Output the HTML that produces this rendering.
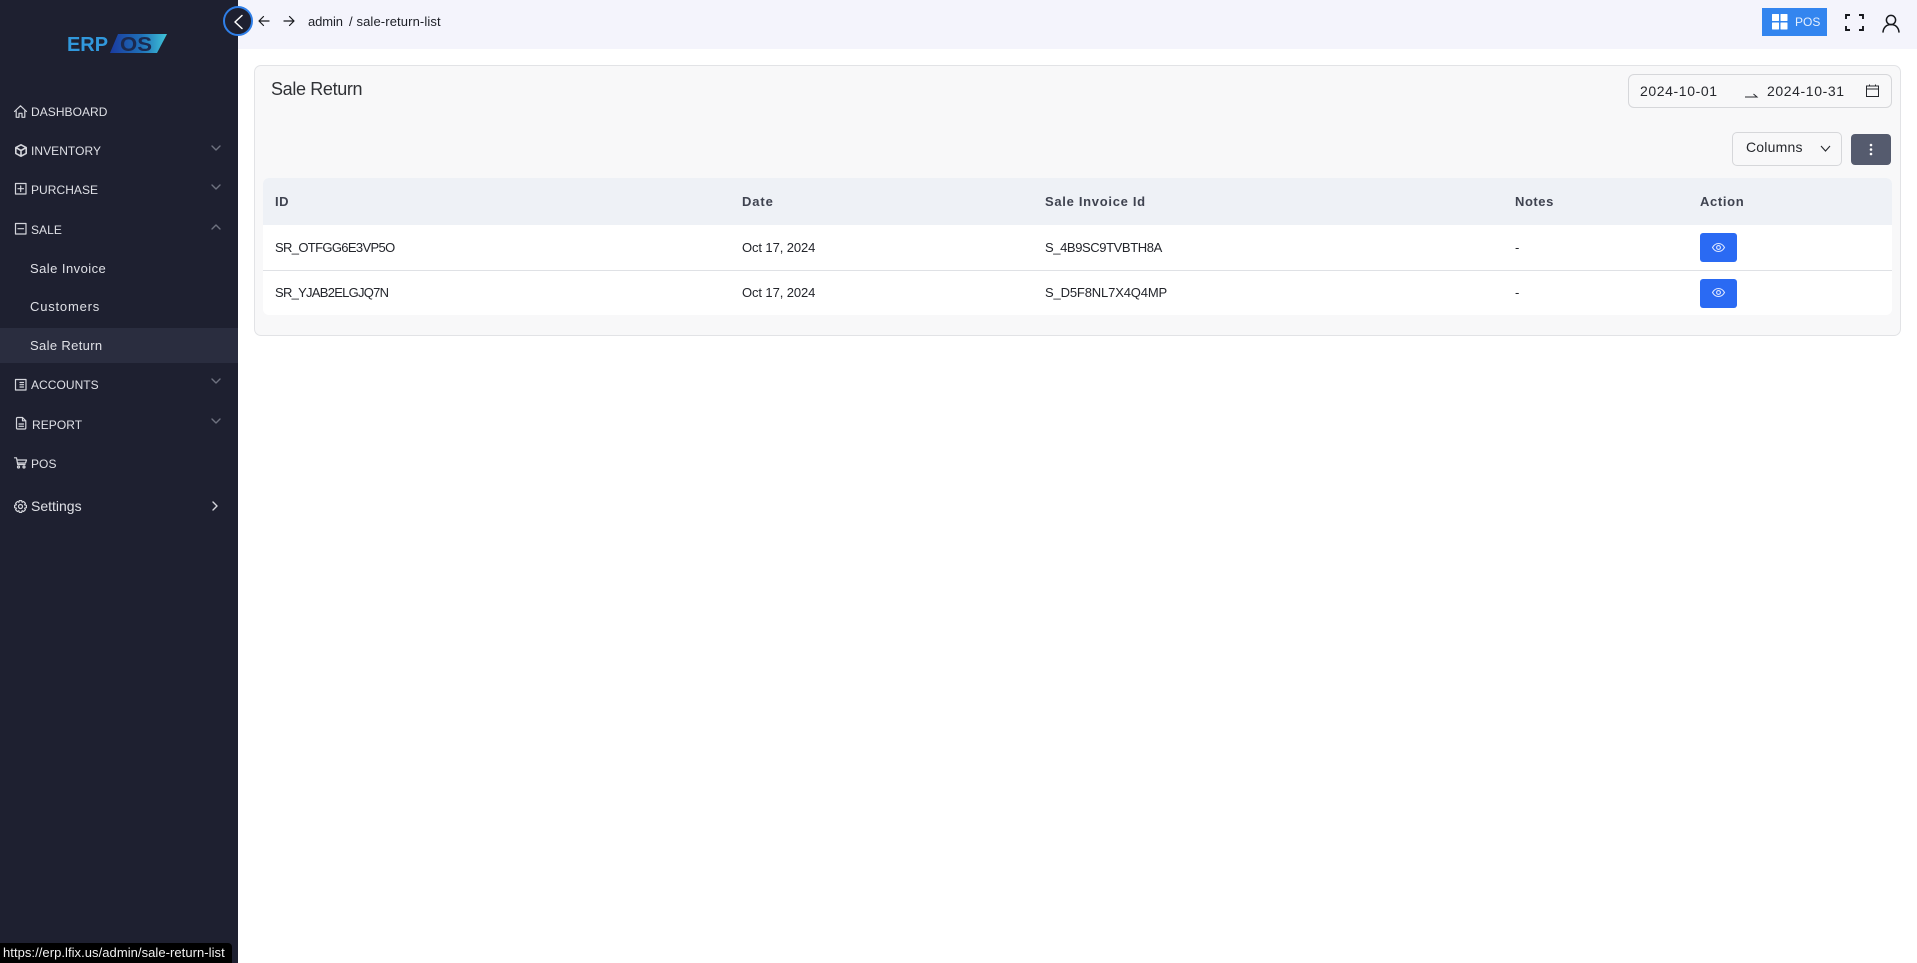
<!DOCTYPE html>
<html lang="en">
<head>
<meta charset="utf-8">
<title>Sale Return</title>
<style>
html,body{margin:0;padding:0;width:1917px;height:963px;overflow:hidden;background:#fff;font-family:"Liberation Sans",sans-serif}
*{box-sizing:border-box}
.a{position:absolute}
.t{position:absolute;white-space:nowrap;line-height:20px;height:20px}
.nav{color:#dfe0e6;font-size:12px;left:31px;letter-spacing:.05px}
.sub{color:#dfe0e6;font-size:13px;left:30px;letter-spacing:.45px}
.th{color:#3f4350;font-size:13px;font-weight:700;letter-spacing:.55px}
.td{color:#23252b;font-size:13px}
svg{position:absolute;overflow:visible}
.ic{fill:none;stroke:#d5d6dc;stroke-width:1.2;stroke-linecap:round;stroke-linejoin:round}
.ch{fill:none;stroke:#6f7280;stroke-width:1.4;stroke-linecap:round;stroke-linejoin:round}
.eye{width:37px;height:29px;left:1700px;background:#2a6af3;border-radius:3px}
</style>
</head>
<body>
<!-- top bar -->
<div class="a" style="left:238px;top:0;width:1679px;height:49px;background:#f4f4fc"></div>
<!-- sidebar -->
<div class="a" style="left:0;top:0;width:238px;height:963px;background:#1e2030"></div>
<div class="a" style="left:0;top:328px;width:238px;height:35px;background:#2a2d3f"></div>

<!-- logo -->
<svg style="left:66px;top:32px" width="102" height="24" viewBox="0 0 102 24">
<defs><linearGradient id="g" x1="0" x2="1" y1="0" y2="0"><stop offset="0" stop-color="#1a3a9e"/><stop offset=".55" stop-color="#1f70b8"/><stop offset="1" stop-color="#40c4d8"/></linearGradient></defs>
<polygon points="44,21 52,2 101,2 91,21" fill="url(#g)"/>
<text x="1" y="19" font-family="Liberation Sans" font-weight="700" font-size="20" fill="#3198dc" textLength="41" lengthAdjust="spacingAndGlyphs">ERP</text>
<text x="54" y="19" font-family="Liberation Sans" font-weight="700" font-size="20" fill="#1b2a50" textLength="32" lengthAdjust="spacingAndGlyphs">OS</text>
</svg>

<!-- collapse toggle -->
<div class="a" style="left:223px;top:6px;width:30px;height:30px;border-radius:50%;background:#1e2030;border:2px solid #2f7fe8"></div>
<svg style="left:232px;top:14px" width="14" height="16"><path d="M10 1.5 L3 8 L10 14.5" fill="none" stroke="#fff" stroke-width="1.5" stroke-linecap="round" stroke-linejoin="round"/></svg>

<!-- nav icons -->
<svg class="ic" style="left:14px;top:105px" width="13" height="13" viewBox="0 0 13 13"><path d="M.5 6.5 L6.5 .8 L12.5 6.5M2.2 5.5V12.3H5V8.3H8V12.3H10.8V5.5"/></svg>
<svg class="ic" style="left:15px;top:144px;stroke-width:1.6" width="12" height="13" viewBox="0 0 12 13"><path d="M6 .8 L11.2 3.6V9.4L6 12.2 L.8 9.4V3.6ZM.8 3.6 L6 6.5 L11.2 3.6M6 6.5V12.2"/></svg>
<svg class="ic" style="left:15px;top:183px" width="11" height="12"><rect x=".5" y=".5" width="10.5" height="10.5"/><path d="M5.7 3V8.5M3 5.7H8.5"/></svg>
<svg class="ic" style="left:15px;top:223px" width="11" height="12"><rect x=".5" y=".5" width="10.5" height="10.5"/><path d="M3 5.7H8.5"/></svg>
<svg class="ic" style="left:15px;top:379px" width="11" height="12"><rect x=".5" y=".5" width="10.5" height="10.5"/><path d="M5 3.5H8.5M5 5.7H8.5M5 8H8.5" /></svg>
<svg class="ic" style="left:16px;top:417px" width="11" height="13"><path d="M.5 1.5 Q.5 .5 1.5 .5H6.5L9.8 3.8V11Q9.8 12 8.8 12H1.5Q.5 12 .5 11ZM6.5 .5V3.8H9.8M3 7H7.5M3 9.3H7.5"/></svg>
<svg class="ic" style="left:14px;top:457px" width="13" height="12"><path d="M.5 .8H2.5L3.7 7.5H11M3 3H12.5L11.5 6H3.5"/><circle cx="4.5" cy="10" r="1"/><circle cx="10" cy="10" r="1"/></svg>
<svg class="ic" style="left:14px;top:500px" width="13" height="13" viewBox="0 0 13 13"><path d="M5.3.6H7.7L8.1 2.3 9.6 1.5 11.4 3.3 10.6 4.8 12.4 5.3V7.7L10.6 8.2 11.4 9.7 9.6 11.5 8.1 10.7 7.7 12.4H5.3L4.9 10.7 3.4 11.5 1.6 9.7 2.4 8.2.6 7.7V5.3L2.4 4.8 1.6 3.3 3.4 1.5 4.9 2.3Z"/><circle cx="6.5" cy="6.5" r="2"/></svg>

<!-- nav text -->
<div class="t nav" style="top:102px">DASHBOARD</div>
<div class="t nav" style="top:141px">INVENTORY</div>
<div class="t nav" style="top:180px">PURCHASE</div>
<div class="t nav" style="top:220px">SALE</div>
<div class="t sub" style="top:259px">Sale Invoice</div>
<div class="t sub" style="top:297px;letter-spacing:.8px">Customers</div>
<div class="t sub" style="top:336px;letter-spacing:.35px">Sale Return</div>
<div class="t nav" style="top:375px">ACCOUNTS</div>
<div class="t nav" style="top:415px;left:32px">REPORT</div>
<div class="t nav" style="top:454px">POS</div>
<div class="t nav" style="top:496px;font-size:14px;letter-spacing:0">Settings</div>

<!-- chevrons -->
<svg class="ch" style="left:211px;top:145px" width="10" height="6"><path d="M1 1L5 5L9 1"/></svg>
<svg class="ch" style="left:211px;top:184px" width="10" height="6"><path d="M1 1L5 5L9 1"/></svg>
<svg class="ch" style="left:211px;top:224px" width="10" height="6"><path d="M1 5L5 1L9 5"/></svg>
<svg class="ch" style="left:211px;top:378px" width="10" height="6"><path d="M1 1L5 5L9 1"/></svg>
<svg class="ch" style="left:211px;top:418px" width="10" height="6"><path d="M1 1L5 5L9 1"/></svg>
<svg style="left:212px;top:501px" width="6" height="10"><path d="M1 1L5 5L1 9" fill="none" stroke="#d5d6dc" stroke-width="1.4" stroke-linecap="round" stroke-linejoin="round"/></svg>

<!-- breadcrumb -->
<svg style="left:258px;top:15px" width="12" height="12"><path d="M11 6H1M5.5 1.5L1 6L5.5 10.5" fill="none" stroke="#16181d" stroke-width="1.2" stroke-linecap="round" stroke-linejoin="round"/></svg>
<svg style="left:283px;top:15px" width="12" height="12"><path d="M1 6H11M6.5 1.5L11 6L6.5 10.5" fill="none" stroke="#16181d" stroke-width="1.2" stroke-linecap="round" stroke-linejoin="round"/></svg>
<div class="t" style="left:308px;top:12px;font-size:13px;color:#1d1f26;letter-spacing:-.1px">admin</div>
<div class="t" style="left:349px;top:12px;font-size:13px;color:#1d1f26;letter-spacing:.12px">/ sale-return-list</div>

<!-- POS + icons -->
<div class="a" style="left:1762px;top:8px;width:65px;height:28px;background:#3385ef"></div>
<svg style="left:1772px;top:14px" width="16" height="16"><rect width="7" height="7" x="0" y="0" fill="#fff" rx=".5"/><rect width="7" height="7" x="8.5" y="0" fill="#fff" rx=".5"/><rect width="7" height="7" x="0" y="8.5" fill="#fff" rx=".5"/><rect width="7" height="7" x="8.5" y="8.5" fill="#fff" rx=".5"/></svg>
<div class="t" style="left:1795px;top:12px;font-size:12px;color:#e6f0fe">POS</div>
<svg style="left:1845px;top:14px" width="19" height="17"><path d="M1 5V1H5M14 1H18V5M18 12V16H14M5 16H1V12" fill="none" stroke="#16181d" stroke-width="1.9"/></svg>
<svg style="left:1882px;top:14px" width="18" height="19"><circle cx="9" cy="6" r="4.6" fill="none" stroke="#16181d" stroke-width="1.5"/><path d="M1 18C1.5 13.5 4.5 10.5 9 10.5S16.5 13.5 17 18" fill="none" stroke="#16181d" stroke-width="1.5" stroke-linecap="round"/></svg>

<!-- card -->
<div class="a" style="left:254px;top:65px;width:1647px;height:271px;background:#f8f8f9;border:1px solid #e2e3e6;border-radius:7px"></div>
<div class="t" style="left:271px;top:78px;font-size:18px;line-height:22px;height:22px;color:#303236;letter-spacing:-.35px">Sale Return</div>

<!-- date range -->
<div class="a" style="left:1628px;top:74px;width:264px;height:34px;border:1px solid #d6d7da;border-radius:6px"></div>
<div class="t" style="left:1640px;top:81px;font-size:14px;color:#26282d;letter-spacing:.6px">2024-10-01</div>
<div class="t" style="left:1767px;top:81px;font-size:14px;color:#26282d;letter-spacing:.6px">2024-10-31</div>
<svg style="left:1745px;top:92px" width="13" height="6"><path d="M0 5H12L8.5 2" fill="none" stroke="#26282d" stroke-width="1"/></svg>
<svg style="left:1866px;top:84px" width="13" height="14"><rect x=".5" y="2" width="12" height="10.5" fill="none" stroke="#26282d" stroke-width="1"/><path d="M.5 5H12.5M3.5 .5V2.5M9.5 .5V2.5" fill="none" stroke="#26282d" stroke-width="1"/></svg>

<!-- columns -->
<div class="a" style="left:1732px;top:132px;width:110px;height:34px;border:1px solid #d6d7da;border-radius:5px"></div>
<div class="t" style="left:1746px;top:137px;font-size:14px;color:#26282d;letter-spacing:.2px">Columns</div>
<svg style="left:1820px;top:145px" width="11" height="7"><path d="M1 1L5.5 6L10 1" fill="none" stroke="#26282d" stroke-width="1.1"/></svg>
<div class="a" style="left:1851px;top:134px;width:40px;height:31px;background:#555b6e;border-radius:4px"></div>
<svg style="left:1869px;top:143px" width="4" height="13"><circle cx="2" cy="2" r="1.3" fill="#fff"/><circle cx="2" cy="6.5" r="1.3" fill="#fff"/><circle cx="2" cy="11" r="1.3" fill="#fff"/></svg>

<!-- table -->
<div class="a" style="left:263px;top:178px;width:1629px;height:137px;background:#fff;border-radius:6px;overflow:hidden">
  <div class="a" style="left:0;top:0;width:100%;height:47px;background:#eef1f6"></div>
  <div class="a" style="left:0;top:92px;width:100%;height:1px;background:#dfe1e5"></div>
</div>
<div class="t th" style="left:275px;top:192px">ID</div>
<div class="t th" style="left:742px;top:192px;letter-spacing:.9px">Date</div>
<div class="t th" style="left:1045px;top:192px;letter-spacing:.7px">Sale Invoice Id</div>
<div class="t th" style="left:1515px;top:192px">Notes</div>
<div class="t th" style="left:1700px;top:192px;letter-spacing:.65px">Action</div>

<div class="t td" style="left:275px;top:238px;letter-spacing:-.65px">SR_OTFGG6E3VP5O</div>
<div class="t td" style="left:742px;top:238px;letter-spacing:-.1px">Oct 17, 2024</div>
<div class="t td" style="left:1045px;top:238px;letter-spacing:-.4px">S_4B9SC9TVBTH8A</div>
<div class="t td" style="left:1515px;top:238px">-</div>
<div class="a eye" style="top:233px"></div>

<div class="t td" style="left:275px;top:283px;letter-spacing:-.73px">SR_YJAB2ELGJQ7N</div>
<div class="t td" style="left:742px;top:283px;letter-spacing:-.1px">Oct 17, 2024</div>
<div class="t td" style="left:1045px;top:283px;letter-spacing:-.15px">S_D5F8NL7X4Q4MP</div>
<div class="t td" style="left:1515px;top:283px">-</div>
<div class="a eye" style="top:279px"></div>

<svg style="left:1712px;top:243px" width="13" height="9"><path d="M.5 4.5C2 1.8 4 .5 6.5 .5S11 1.8 12.5 4.5C11 7.2 9 8.5 6.5 8.5S2 7.2 .5 4.5Z" fill="none" stroke="#dfe8ff" stroke-width="1.1"/><circle cx="6.5" cy="4.5" r="1.9" fill="none" stroke="#dfe8ff" stroke-width="1.1"/></svg>
<svg style="left:1712px;top:288px" width="13" height="9"><path d="M.5 4.5C2 1.8 4 .5 6.5 .5S11 1.8 12.5 4.5C11 7.2 9 8.5 6.5 8.5S2 7.2 .5 4.5Z" fill="none" stroke="#dfe8ff" stroke-width="1.1"/><circle cx="6.5" cy="4.5" r="1.9" fill="none" stroke="#dfe8ff" stroke-width="1.1"/></svg>

<!-- status bar -->
<div class="a" style="left:0;top:943px;width:232px;height:20px;background:#000;border-top-right-radius:4px"></div>
<div class="t" style="left:3px;top:943px;font-size:13px;color:#f2f2f2;letter-spacing:.05px">https://erp.lfix.us/admin/sale-return-list</div>
</body>
</html>
